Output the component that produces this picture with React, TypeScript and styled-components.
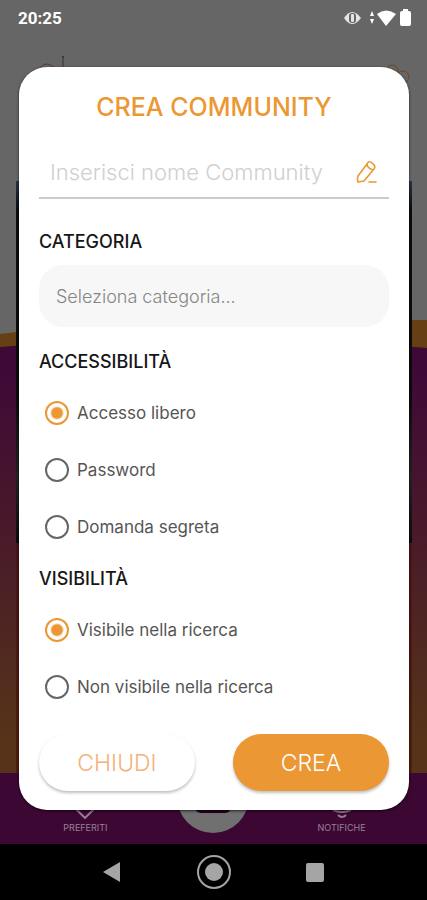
import React, { useState } from "react";
import styled, { createGlobalStyle } from "styled-components";

const ORANGE = "#eb9733";

const GlobalStyle = createGlobalStyle`
  *, *::before, *::after { box-sizing: border-box; }
  body { margin: 0; background: #000; font-family: Inter, "Open Sans", sans-serif; }
  button, input, select { font: inherit; }
  h1, h2 { margin: 0; }
`;

const Phone = styled.div`
  display: flex;
  flex-direction: column;
  min-height: 100vh;
`;

const Stage = styled.main`
  flex: 1;
  display: grid;
  grid-template-columns: minmax(0, 1fr);
  background: #666;
  > * { grid-area: 1 / 1; }
`;

const Page = styled.div`
  display: grid;
  grid-template-rows: 320px minmax(0, 1fr) 71px;
`;

const StatusBar = styled.header`
  display: flex;
  justify-content: space-between;
  align-items: center;
  align-self: start;
  height: 36px;
  padding: 0 16px 0 18px;
  color: #fff;
  font: 700 17px/20px Roboto, sans-serif;
`;

const StatusIcons = styled.svg`
  display: block;
  width: 68px;
  height: 20px;
`;

const Sunset = styled.div`
  background: linear-gradient(#3d0a38 10%, #48192a 45%, #563319 92%);
`;

const Wave = styled.svg`
  display: block;
  width: 100%;
  height: 32px;
`;

const Feed = styled.div`
  display: grid;
  grid-template-rows: 362px 1fr;
  margin: 181px 15px 71px 16px;
`;

const Photo = styled.div`
  background: linear-gradient(#26364b, #0c0d10 8%, #0c0c0c 60%, #232323 82%, #0c0c0c);
`;

const PhotoFooter = styled.div`
  background: linear-gradient(#4d1418, #521f0c);
`;

const TabBar = styled.nav`
  display: grid;
  grid-template-columns: 2fr 1fr 2fr;
  grid-template-rows: 71px;
  justify-items: center;
  align-items: end;
  background: #3d0734;
`;

const Tab = styled.a`
  display: flex;
  flex-direction: column;
  align-items: center;
  gap: 4px;
  padding-bottom: 11px;
  color: #97809a;
  font-size: 9px;
  line-height: 10px;
  text-decoration: none;
`;

const TabIcon = styled.svg`
  width: 26px;
  height: 22px;
`;

const CenterIcon = styled.svg`
  width: 72px;
  height: 72px;
  margin-bottom: 11px;
`;

const Corner = styled.svg`
  justify-self: ${(p: { $end?: boolean }) => (p.$end ? "end" : "start")};
  width: 60px;
  height: 40px;
  margin: 52px 12px 0 36px;
`;

const Dialog = styled.form`
  display: flex;
  flex-direction: column;
  margin: 67px 18px 34px 19px;
  padding: 24px 20px 19px;
  border-radius: 28px;
  background: #fff;
  box-shadow: 0 1px 3px rgba(0, 0, 0, 0.7);
  z-index: 1;
`;

const Title = styled.h1`
  color: ${ORANGE};
  font-size: 25px;
  line-height: 32px;
  font-weight: 500;
  text-align: center;
`;

const NameField = styled.label`
  display: flex;
  align-items: center;
  height: 56px;
  margin-top: 20px;
  padding: 4px 12px 0 11px;
  border-bottom: 2px solid #cbcbcb;
`;

const NameInput = styled.input`
  flex: 1;
  min-width: 0;
  padding: 0;
  border: 0;
  outline: 0;
  background: none;
  color: #444;
  font-size: 22px;
  font-weight: 300;
  &::placeholder { color: #cfcfcf; opacity: 1; }
`;

const Pencil = styled.svg`
  flex: none;
  width: 22px;
  height: 24px;
`;

const SectionTitle = styled.h2`
  display: block;
  color: #161616;
  font-size: 18px;
  line-height: 24px;
  font-weight: 500;
`;

const CategoryField = styled.label`
  display: flex;
  flex-direction: column;
  gap: 11px;
  margin: 31px 0 23px;
`;

const CategorySelect = styled.select`
  appearance: none;
  width: 100%;
  height: 62px;
  padding: 0 17px;
  border: 0;
  border-radius: 24px;
  background: #f7f7f7;
  color: #858585;
  font-size: 18px;
  font-weight: 300;
`;

const Group = styled.div`
  display: flex;
  flex-direction: column;
`;

const Options = styled.div`
  display: flex;
  flex-direction: column;
  padding: 10px 0 12px;
`;

const Option = styled.label`
  display: flex;
  align-items: center;
  gap: 8px;
  height: 57px;
  padding-left: 6px;
  color: #555;
  font-size: 17px;
  line-height: 20px;
`;

const Radio = styled.input`
  appearance: none;
  flex: none;
  width: 24px;
  height: 24px;
  margin: 0;
  border: 2px solid #666;
  border-radius: 50%;
  &:checked {
    border-color: ${ORANGE};
    background: radial-gradient(circle, ${ORANGE} 5px, transparent 7px);
  }
`;

const Actions = styled.div`
  display: grid;
  grid-template-columns: 1fr 1fr;
  gap: 38px;
  margin-top: auto;
`;

const Action = styled.button<{ $primary?: boolean }>`
  height: 57px;
  border: 0;
  border-radius: 29px;
  background: ${(p) => (p.$primary ? ORANGE : "#fff")};
  color: ${(p) => (p.$primary ? "#fff" : "#f3b27a")};
  font-size: 23px;
  font-weight: 300;
  box-shadow: 0 2px 3px rgba(0, 0, 0, 0.25);
`;

const SystemBar = styled.nav`
  display: grid;
  grid-template-columns: 1fr 1fr 1fr;
  align-items: center;
  height: 56px;
  padding: 0 61px 0 62px;
  background: #000;
`;

const SystemButton = styled.button`
  display: flex;
  justify-content: center;
  padding: 0;
  border: 0;
  background: none;
`;

const SystemIcon = styled.svg`
  width: 36px;
  height: 36px;
`;

const access = ["Accesso libero", "Password", "Domanda segreta"];
const visibility = ["Visibile nella ricerca", "Non visibile nella ricerca"];

function RadioGroup({ title, name, items }: { title: string; name: string; items: string[] }) {
  const [value, setValue] = useState(items[0]);
  return (
    <Group role="radiogroup" aria-labelledby={name}>
      <SectionTitle id={name}>{title}</SectionTitle>
      <Options>
        {items.map((item) => (
          <Option key={item}>
            <Radio type="radio" name={name} checked={value === item} onChange={() => setValue(item)} />
            {item}
          </Option>
        ))}
      </Options>
    </Group>
  );
}

export default function App() {
  return (
    <Phone>
      <GlobalStyle />
      <Stage>
        <Page>
          <div />
          <Sunset>
            <Wave viewBox="0 0 427 32" preserveAspectRatio="none">
              <path d="M0 0H427V28Q213 8 0 27Z" fill="#654014" />
              <path d="M0 0H427Q340 -8 220 0Q80 3 0 14Z" fill="#666" />
            </Wave>
          </Sunset>
          <TabBar aria-label="Sezioni">
            <Tab href="#preferiti">
              <TabIcon viewBox="0 0 26 22" fill="none" stroke="#927b92" strokeWidth="2">
                <path d="M13 21L3 11C-2 3 9-2 13 5C17-2 28 3 23 11Z" />
              </TabIcon>
              PREFERITI
            </Tab>
            <CenterIcon viewBox="0 0 72 72">
              <circle cx="36" cy="36" r="36" fill="#707070" />
              <rect x="18" y="22" width="36" height="30" rx="6" fill="#250020" />
            </CenterIcon>
            <Tab href="#notifiche">
              <TabIcon viewBox="0 0 26 22" fill="none" stroke="#927b92" strokeWidth="2">
                <path d="M4 13Q13 17 22 13M4 13Q6 10 6 7Q7 1 13 1Q19 1 20 7Q20 10 22 13M9 18Q13 22 17 18" />
              </TabIcon>
              NOTIFICHE
            </Tab>
          </TabBar>
        </Page>
        <Feed>
          <Photo />
          <PhotoFooter />
        </Feed>
        <Corner viewBox="0 0 60 40" fill="none" stroke="#5d3a25" strokeWidth="1">
          <circle cx="11" cy="20" r="8" />
          <path d="M27 4V18" stroke="#432b43" />
          <circle cx="27" cy="5" r="1" fill="#432b43" stroke="none" />
        </Corner>
        <Corner $end viewBox="0 0 60 40" fill="none" stroke="#74451c" strokeWidth="1">
          <circle cx="37" cy="19" r="6" />
          <circle cx="48" cy="25" r="6" />
        </Corner>
        <StatusBar>
          <time>20:25</time>
          <StatusIcons viewBox="0 0 68 20" fill="#fff" aria-label="Stato">
            <path d="M1 10Q9-2 18 10Q9 22 1 10Z" fill="#e4e4e4" />
            <rect x="6" y="5" width="7" height="10" rx="3" fill="#666" />
            <rect x="8" y="6" width="3" height="8" rx="1" fill="#e4e4e4" />
            <path d="M29 3L31 8H27ZM29 16L31 11H27Z" />
            <path d="M34 6Q43-1 53 6L43 18Z" />
            <path d="M59 3H60V1H65V3H66Q68 3 68 5V16Q68 18 66 18H59Q57 18 57 16V5Q57 3 59 3Z" />
          </StatusIcons>
        </StatusBar>
        <Dialog role="dialog" aria-labelledby="title" onSubmit={(e) => e.preventDefault()}>
          <Title id="title">CREA COMMUNITY</Title>
          <NameField>
            <NameInput aria-label="Nome Community" placeholder="Inserisci nome Community" />
            <Pencil viewBox="0 0 22 24" fill="none" stroke={ORANGE} strokeWidth="1.6" strokeLinejoin="round" strokeLinecap="round">
              <path d="M3 16L12 4Q14 0 17 3L18 4Q21 6 19 9L9 21L3 22Q2 19 3 16ZM12 4Q12 8 18 10" />
              <path d="M14 22H21" />
            </Pencil>
          </NameField>
          <CategoryField>
            <SectionTitle as="span">CATEGORIA</SectionTitle>
            <CategorySelect defaultValue="">
              <option value="">Seleziona categoria...</option>
            </CategorySelect>
          </CategoryField>
          <RadioGroup title="ACCESSIBILITÀ" name="access" items={access} />
          <RadioGroup title="VISIBILITÀ" name="visibility" items={visibility} />
          <Actions>
            <Action type="button">CHIUDI</Action>
            <Action type="submit" $primary>CREA</Action>
          </Actions>
        </Dialog>
      </Stage>
      <SystemBar aria-label="Sistema">
        <SystemButton aria-label="Indietro">
          <SystemIcon viewBox="0 0 36 36"><path d="M8 18L25 8V28Z" fill="#a5a5a5" /></SystemIcon>
        </SystemButton>
        <SystemButton aria-label="Home">
          <SystemIcon viewBox="0 0 36 36">
            <circle cx="18" cy="18" r="16" fill="none" stroke="#a5a5a5" strokeWidth="2" />
            <circle cx="18" cy="18" r="9" fill="#a5a5a5" />
          </SystemIcon>
        </SystemButton>
        <SystemButton aria-label="Recenti">
          <SystemIcon viewBox="0 0 36 36"><rect x="9" y="9" width="18" height="19" rx="2" fill="#a5a5a5" /></SystemIcon>
        </SystemButton>
      </SystemBar>
    </Phone>
  );
}
